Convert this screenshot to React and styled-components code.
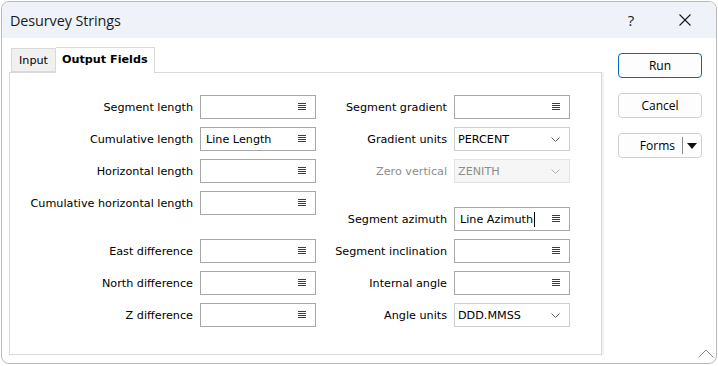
import React from "react";
import styled, { createGlobalStyle } from "styled-components";

const Global = createGlobalStyle`
  html, body { margin: 0; padding: 0; background: #ffffff; }
  body { font-family: "DejaVu Sans", sans-serif; }
  * { box-sizing: border-box; }
`;

const Window = styled.div`
  position: relative;
  margin: 1px 0 0 1px;
  width: 716px;
  height: 363px;
  border: 1px solid #b9b9b9;
  border-radius: 8px;
  overflow: hidden;
  background: #ffffff;
  display: flex;
  flex-direction: column;
`;

const TitleBar = styled.div`
  height: 36px;
  flex: none;
  background: #eff2f9;
  display: flex;
  align-items: center;
  padding-left: 8px;
`;

const Title = styled.div`
  flex: 1;
  font-family: "Open Sans", sans-serif;
  font-size: 14.4px;
  color: #1a1a1a;
  letter-spacing: -0.1px;
`;

const TitleButton = styled.div`
  width: ${(p) => p.$w}px;
  height: 36px;
  display: flex;
  align-items: center;
  justify-content: center;
  font-family: "Open Sans", sans-serif;
  font-size: 15px;
  color: #1a1a1a;
`;

const Body = styled.div`
  flex: 1;
  display: flex;
  padding: 10px 0 0 7px;
`;

const TabArea = styled.div`
  width: 593px;
  height: 307px;
  display: flex;
  flex-direction: column;
`;

const TabStrip = styled.div`
  height: 24px;
  display: flex;
  align-items: flex-end;
  padding-left: 2px;
  position: relative;
  z-index: 1;
`;

const Tab = styled.div`
  height: ${(p) => (p.$active ? 26 : 24)}px;
  margin-bottom: ${(p) => (p.$active ? -1 : 0)}px;
  padding: 0 ${(p) => (p.$active ? 6 : 7)}px;
  display: flex;
  align-items: center;
  background: ${(p) => (p.$active ? "#ffffff" : "#f0f0f0")};
  border: 1px solid #d9d9d9;
  border-bottom: ${(p) => (p.$active ? "none" : "1px solid #d9d9d9")};
  border-left: ${(p) => (p.$active ? "none" : "1px solid #d9d9d9")};
  font-size: 11.2px;
  font-weight: ${(p) => (p.$active ? "bold" : "normal")};
  color: #000;
  padding-bottom: ${(p) => (p.$active ? 2 : 0)}px;
`;

const Panel = styled.div`
  flex: 1;
  border: 1px solid #d9d9d9;
  background: #ffffff;
  box-shadow: 2px 0 0 #f2f2f2;
  display: flex;
  padding: 22px 0 0 0;
`;

const Column = styled.div`
  display: flex;
  flex-direction: column;
  gap: 8px;
  margin-left: ${(p) => p.$ml}px;
`;

const Row = styled.div`
  display: flex;
  align-items: center;
  height: 24px;
  gap: 7px;
`;

const Spacer = styled.div`
  height: 8px;
`;

const Label = styled.div`
  width: ${(p) => p.$w}px;
  text-align: right;
  font-size: 11.2px;
  color: ${(p) => (p.$disabled ? "#8d8d8d" : "#000000")};
  white-space: nowrap;
`;

const FieldBox = styled.div`
  width: 116px;
  height: 24px;
  border: 1px solid ${(p) => (p.$select ? (p.$disabled ? "#e3e3e3" : "#cfcfcf") : "#a8a8a8")};
  background: ${(p) => (p.$disabled ? "#f6f6f6" : "#ffffff")};
  display: flex;
  align-items: center;
  padding: 0 9px 0 ${(p) => (p.$select ? 3 : 5)}px;
  font-size: 11.2px;
  color: ${(p) => (p.$disabled ? "#8d8d8d" : "#000000")};
`;

const FieldText = styled.div`
  flex: 1;
  white-space: nowrap;
  display: flex;
  align-items: center;
`;

const Caret = styled.span`
  display: inline-block;
  width: 1px;
  height: 15px;
  background: #000;
  margin-left: 1px;
`;

const ButtonColumn = styled.div`
  display: flex;
  flex-direction: column;
  gap: 15px;
  margin-left: 16px;
  padding-top: 5px;
`;

const Button = styled.div`
  width: 84px;
  height: 25px;
  border: 1px solid ${(p) => (p.$primary ? "#0a64c2" : "#d0d0d0")};
  border-radius: 4px;
  background: #fdfdfd;
  display: flex;
  align-items: center;
  justify-content: center;
  font-family: "Open Sans", sans-serif;
  font-size: 12px;
  color: #000;
`;

const SplitButton = styled(Button)`
  justify-content: flex-end;
  padding-right: 4px;
`;

const SplitSep = styled.div`
  width: 1px;
  height: 17px;
  background: #8a8a8a;
  margin: 0 4px 0 7px;
`;

const Grip = styled.div`
  position: absolute;
  right: 2px;
  bottom: 4px;
  width: 16px;
  height: 10px;
  display: flex;
`;

const ListIcon = () => (
  <svg width="8" height="8" viewBox="0 0 8 8">
    <g stroke="#3c3c3c" strokeWidth="1">
      <line x1="0" y1="0.5" x2="8" y2="0.5" />
      <line x1="0" y1="2.5" x2="8" y2="2.5" />
      <line x1="0" y1="4.5" x2="8" y2="4.5" />
      <line x1="0" y1="6.5" x2="8" y2="6.5" />
    </g>
  </svg>
);

const Chevron = ({ color = "#5a5a5a" }) => (
  <svg width="9" height="5" viewBox="0 0 9 5">
    <polyline points="0.5,0.5 4.5,4.5 8.5,0.5" fill="none" stroke={color} strokeWidth="1" />
  </svg>
);

const TextField = ({ value, caret }) => (
  <FieldBox>
    <FieldText>
      {value}
      {caret && <Caret />}
    </FieldText>
    <ListIcon />
  </FieldBox>
);

const SelectField = ({ value, disabled }) => (
  <FieldBox $select $disabled={disabled}>
    <FieldText>{value}</FieldText>
    <Chevron color={disabled ? "#b5b5b5" : "#5a5a5a"} />
  </FieldBox>
);

const leftRows = [
  ["Segment length", ""],
  ["Cumulative length", "Line Length"],
  ["Horizontal length", ""],
  ["Cumulative horizontal length", ""],
  null,
  ["East difference", ""],
  ["North difference", ""],
  ["Z difference", ""],
];

export default function App() {
  return (
    <>
      <Global />
      <Window>
        <TitleBar>
          <Title>Desurvey Strings</Title>
          <TitleButton $w={46}>?</TitleButton>
          <TitleButton $w={62}>
            <svg width="12" height="12" viewBox="0 0 12 12">
              <g stroke="#1a1a1a" strokeWidth="1.1">
                <line x1="0.5" y1="0.5" x2="11.5" y2="11.5" />
                <line x1="11.5" y1="0.5" x2="0.5" y2="11.5" />
              </g>
            </svg>
          </TitleButton>
        </TitleBar>
        <Body>
          <TabArea>
            <TabStrip>
              <Tab>Input</Tab>
              <Tab $active>Output Fields</Tab>
            </TabStrip>
            <Panel>
              <Column $ml={0}>
                {leftRows.map((r, i) =>
                  r ? (
                    <Row key={i}>
                      <Label $w={183}>{r[0]}</Label>
                      <TextField value={r[1]} />
                    </Row>
                  ) : (
                    <Spacer key={i} />
                  )
                )}
              </Column>
              <Column $ml={13}>
                <Row>
                  <Label $w={118}>Segment gradient</Label>
                  <TextField value="" />
                </Row>
                <Row>
                  <Label $w={118}>Gradient units</Label>
                  <SelectField value="PERCENT" />
                </Row>
                <Row>
                  <Label $w={118} $disabled>Zero vertical</Label>
                  <SelectField value="ZENITH" disabled />
                </Row>
                <Spacer />
                <Row>
                  <Label $w={118}>Segment azimuth</Label>
                  <TextField value="Line Azimuth" caret />
                </Row>
                <Row>
                  <Label $w={118}>Segment inclination</Label>
                  <TextField value="" />
                </Row>
                <Row>
                  <Label $w={118}>Internal angle</Label>
                  <TextField value="" />
                </Row>
                <Row>
                  <Label $w={118}>Angle units</Label>
                  <SelectField value="DDD.MMSS" />
                </Row>
              </Column>
            </Panel>
          </TabArea>
          <ButtonColumn>
            <Button $primary>Run</Button>
            <Button>Cancel</Button>
            <SplitButton>
              Forms
              <SplitSep />
              <svg width="10" height="6" viewBox="0 0 10 6">
                <polygon points="0,0 10,0 5,6" fill="#111" />
              </svg>
            </SplitButton>
          </ButtonColumn>
        </Body>
        <Grip>
          <svg width="16" height="9" viewBox="0 0 16 9">
            <polyline points="0.5,8.5 8,1 15.5,8.5" fill="none" stroke="#8a8a8a" strokeWidth="1" />
          </svg>
        </Grip>
      </Window>
    </>
  );
}
